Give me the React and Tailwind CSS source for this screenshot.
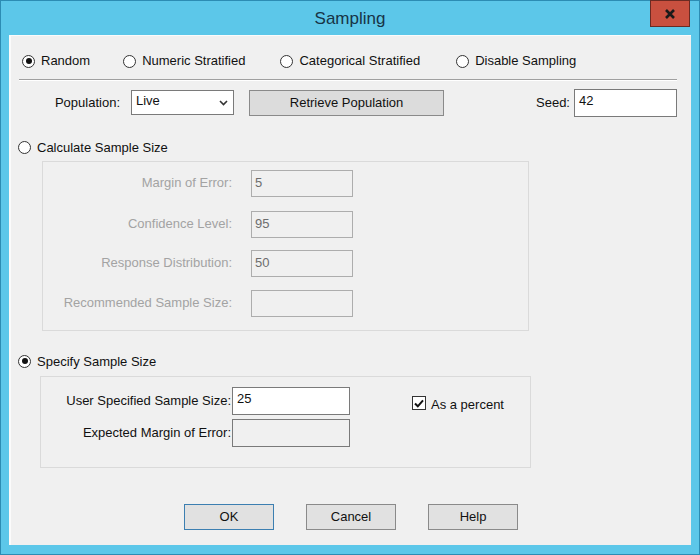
import React from "react";

const font = { fontFamily: '"Liberation Sans", Arial, sans-serif' };

function Radio({ checked }) {
  return (
    <span className="w-[13px] h-[13px] rounded-full border border-[#333] bg-white flex items-center justify-center shrink-0">
      {checked && <span className="w-[6px] h-[6px] rounded-full bg-[#111]" />}
    </span>
  );
}

function RadioLabel({ checked, children, className = "" }) {
  return (
    <div className={"flex items-center gap-[6px] text-[13px] text-[#111] " + className}>
      <Radio checked={checked} />
      <span>{children}</span>
    </div>
  );
}

function DisabledRow({ label, value, mt }) {
  return (
    <div className={"flex items-center " + mt}>
      <span className="w-[189px] text-right text-[13px] text-[#a3a3a3]">{label}</span>
      <div className="ml-[19px] w-[102px] h-[27px] border border-[#adadad] bg-[#f0f0f0] text-[13px] text-[#6d6d6d] px-[3px] pt-[2px]">
        {value}
      </div>
    </div>
  );
}

function Btn({ children, def }) {
  return (
    <div
      className={
        "w-[90px] h-[26px] bg-[#e1e1e1] flex items-center justify-center text-[13px] text-[#111] border " +
        (def ? "border-[#3c7fb1]" : "border-[#8a8a8a]")
      }
    >
      {children}
    </div>
  );
}

export default function App() {
  return (
    <div style={font} className="w-[700px] h-[555px] bg-[#5cc7e9] border border-[#2c8cb3] flex flex-col">
      <div className="relative h-[34px] flex items-center justify-center">
        <span className="text-[17px] text-[#173447] mt-[2px]">Sampling</span>
        <div className="absolute top-[-1px] right-[9px] w-[40px] h-[27px] bg-[#c9503f] border border-[#6b2a22] flex items-center justify-center">
          <svg width="12" height="10" viewBox="0 0 12 10">
            <path d="M2 1 L10 9 M10 1 L2 9" stroke="#1a1a1a" strokeWidth="2.6" />
          </svg>
        </div>
      </div>
      <div className="mx-[8px] mb-[9px] flex-1 bg-[#f0f0f0] border-l-2 border-t border-[#fbfbfb] flex flex-col pl-[7px]">
        <div className="flex items-center mt-[17px] h-[16px]">
          <RadioLabel checked className="ml-[4px]">Random</RadioLabel>
          <RadioLabel className="ml-[33px]">Numeric Stratified</RadioLabel>
          <RadioLabel className="ml-[35px]">Categorical Stratified</RadioLabel>
          <RadioLabel className="ml-[36px]">Disable Sampling</RadioLabel>
        </div>
        <div className="ml-[1px] mr-[14px] mt-[10px] h-[2px] border-t border-[#a0a0a0] border-b border-b-white" />
        <div className="flex items-center mt-[8px] h-[27px]">
          <span className="ml-[36px] text-[13px] text-[#111] w-[66px] text-right">Population:</span>
          <div className="ml-[11px] w-[103px] h-[25px] bg-white border border-[#7a7a7a] flex items-center justify-between pl-[4px] pr-[5px] text-[13px] text-[#111]">
            <span className="-mt-[3px]">Live</span>
            <svg width="9" height="6" viewBox="0 0 9 6">
              <path d="M1 1 L4.5 4.5 L8 1" stroke="#333" strokeWidth="1.6" fill="none" />
            </svg>
          </div>
          <div className="ml-[15px] w-[195px] h-[26px] bg-[#dcdcdc] border border-[#8a8a8a] flex items-center justify-center text-[13px] text-[#111]">
            Retrieve Population
          </div>
          <span className="ml-[92px] text-[13px] text-[#111]">Seed:</span>
          <div className="ml-[4px] w-[103px] h-[28px] bg-white border border-[#7a7a7a] text-[13px] text-[#111] px-[4px] pt-[1px]">
            42
          </div>
        </div>
        <RadioLabel className="mt-[22px]">Calculate Sample Size</RadioLabel>
        <div className="ml-[24px] mt-[3px] w-[487px] h-[170px] border border-[#dadada] flex flex-col">
          <DisabledRow label="Margin of Error:" value="5" mt="mt-[8px]" />
          <DisabledRow label="Confidence Level:" value="95" mt="mt-[14px]" />
          <DisabledRow label="Response Distribution:" value="50" mt="mt-[12px]" />
          <DisabledRow label="Recommended Sample Size:" value="" mt="mt-[13px]" />
        </div>
        <RadioLabel checked className="mt-[21px]">Specify Sample Size</RadioLabel>
        <div className="ml-[22px] mt-[5px] w-[491px] h-[92px] border border-[#dadada] flex">
          <div className="flex flex-col">
            <div className="flex items-center mt-[10px]">
              <span className="w-[190px] text-right text-[13px] text-[#111]">User Specified Sample Size:</span>
              <div className="ml-[1px] w-[118px] h-[28px] bg-white border border-[#7a7a7a] text-[13px] text-[#111] px-[4px] pt-[1px]">25</div>
            </div>
            <div className="flex items-center mt-[4px]">
              <span className="w-[190px] text-right text-[13px] text-[#111]">Expected Margin of Error:</span>
              <div className="ml-[1px] w-[118px] h-[28px] bg-[#f0f0f0] border border-[#7a7a7a]" />
            </div>
          </div>
          <div className="ml-[62px] mt-[19px] flex items-start gap-[5px] text-[13px] text-[#111] h-[16px]">
            <span className="w-[14px] h-[14px] bg-white border border-[#333] flex items-center justify-center">
              <svg width="10" height="9" viewBox="0 0 10 9">
                <path d="M1 4.5 L3.8 7.3 L9 1.3" stroke="#111" strokeWidth="2" fill="none" />
              </svg>
            </span>
            <span className="-mt-[1px]">As a percent</span>
          </div>
        </div>
        <div className="flex mt-[36px] ml-[166px] gap-[32px]">
          <Btn def>OK</Btn>
          <Btn>Cancel</Btn>
          <Btn>Help</Btn>
        </div>
      </div>
    </div>
  );
}
